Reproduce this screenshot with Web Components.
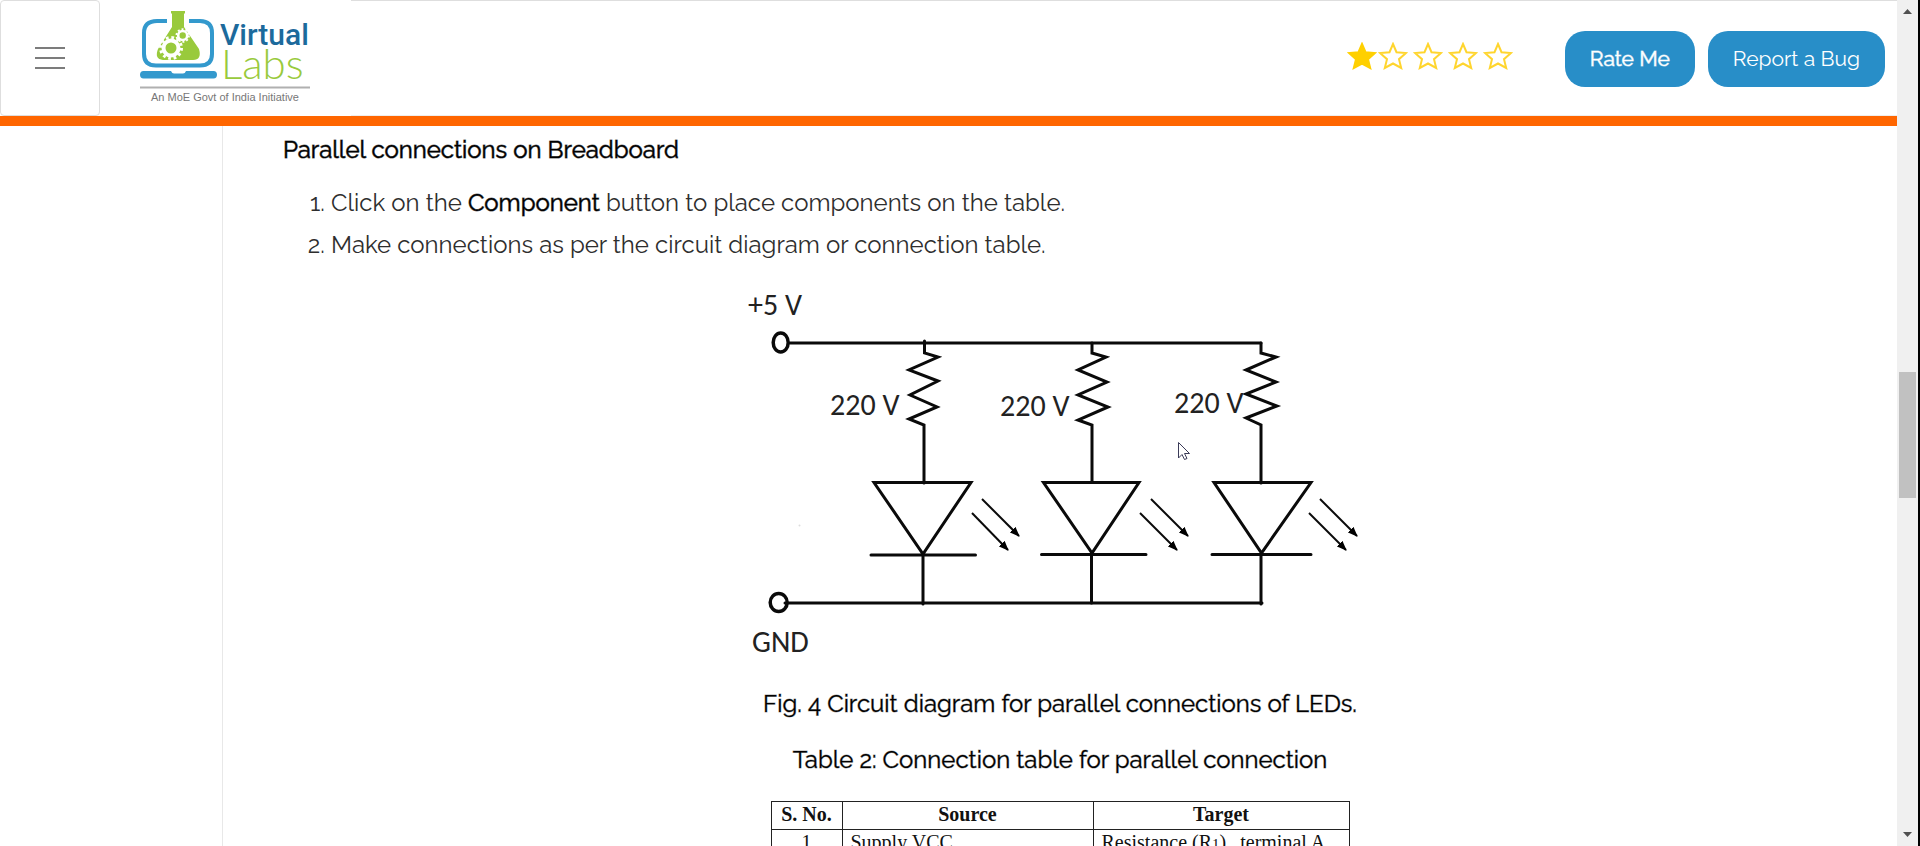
<!DOCTYPE html>
<html lang="en">
<head>
<meta charset="utf-8">
<title>Virtual Labs</title>
<style>
html, body { margin: 0; height: 100%; overflow: hidden; background: #fff; }
</style>
</head>
<body>
<lab-app></lab-app>

<script>
function define(name, markup, setup) {
  const template = document.createElement('template');
  template.innerHTML = markup;
  customElements.define(name, class extends HTMLElement {
    constructor() {
      super();
      this.attachShadow({ mode: 'open' }).appendChild(template.content.cloneNode(true));
    }
    connectedCallback() {
      if (setup) setup(this, this.shadowRoot);
    }
  });
}

define('menu-toggle', `
<style>
:host { display: flex; width: 100px; }
button { flex: 1; display: flex; align-items: center; justify-content: center; padding: 0; background: #fff; border: 1px solid #dedede; border-radius: 4px; }
</style>
<button type="button" aria-label="Toggle menu">
  <svg width="30" height="24" viewBox="0 0 30 24" stroke="#7c7c7c" stroke-width="2"><path d="M0 2H30M0 12H30M0 22H30"/></svg>
</button>`);

define('site-logo', `
<style>
:host { display: flex; }
a { display: block; }
svg { display: block; }
</style>
<a href="#" aria-label="Virtual Labs home">
<svg width="180" height="100" viewBox="136 6 180 100">
  <path d="M167 21H157Q144 21 144 33V54Q144 65.500 156 65.500H200Q212 65.500 212 54V33Q212 21 200 21H189" fill="none" stroke="#3399cd" stroke-width="4"/>
  <path d="M143.500 71H171Q172 73.500 174 73.500H183Q185 73.500 186 71H213.500Q217 71 217 74.800Q217 78.500 213.500 78.500H143.500Q140 78.500 140 74.800Q140 71 143.500 71Z" fill="#3399cd"/>
  <path d="M171 11H185V13.500H184V27L199 49Q202 60 193 60H163Q154 59 158 49L172 27V13.500H171Z" fill="#99ca3c"/>
  <g fill="none" stroke="#fff">
    <circle cx="171" cy="48" r="7.500" stroke-width="4"/>
    <circle cx="171" cy="48" r="10.500" stroke-width="3" stroke-dasharray="2.750 2.750"/>
    <circle cx="182.700" cy="35.500" r="4.500" stroke-width="2.600"/>
    <circle cx="182.700" cy="35.500" r="6.300" stroke-width="1.800" stroke-dasharray="2 1.960"/>
  </g>
  <text x="220" y="45" font-family="Roboto, sans-serif" font-weight="500" font-size="30" fill="#1c6a9c">Virtual</text>
  <text x="221" y="79" font-family="Lato, sans-serif" font-weight="300" font-size="42" fill="#99ca3c">Labs</text>
  <path d="M140 87.500H310" stroke="#b0b0b0" stroke-width="2"/>
  <text x="151" y="101" font-family="Liberation Sans, Arial, sans-serif" font-size="11" fill="#777">An MoE Govt of India Initiative</text>
</svg></a>`);

define('star-rating', `
<style>
:host { display: flex; gap: 5px; }
svg { display: block; fill: none; stroke: #ffd52e; stroke-width: 2; }
svg.on { fill: #ffd000; stroke: #ffd000; margin-right: -4px; }
</style>`, (host, root) => {
  const value = Number(host.getAttribute('value'));
  host.setAttribute('role', 'img');
  host.setAttribute('aria-label', value + ' of 5 stars');
  for (let i = 0; i < 5; i++) {
    root.innerHTML += `<svg class="${i < value ? 'on' : ''}" width="30" height="28" viewBox="0 0 30 28"><path d="M15 2L18.500 10.200L28 11L21 17.200L23.200 26L15 21.500L6.800 26L9 17.200L2 11L11.500 10.200Z"/></svg>`;
  }
});

define('pill-button', `
<style>
:host { display: block; }
button { display: block; height: 56px; padding: 0 25px; border: 0; border-radius: 20px; background: #288ec8; color: #fff; font: 400 21px/30px Raleway, Lato, sans-serif; white-space: nowrap; }
:host([strong]) button { -webkit-text-stroke: 1px rgba(255, 255, 255, .6); }
</style>
<button type="button"><slot></slot></button>`);

define('site-header', `
<style>
:host { display: flex; height: 116px; border-bottom: 10px solid #f60; background: #fff; }
site-logo { padding: 6px 0 0 36px; width: 215px; }
.bar { flex: 1; display: flex; align-items: center; justify-content: flex-end; box-sizing: border-box; padding: 2px 12px 0 0; border-top: 1px solid #dedede; border-bottom: 1px solid #eee; }
star-rating { margin: 0 52px 6px 0; }
.bar pill-button + pill-button { margin-left: 13px; }
</style>
<menu-toggle></menu-toggle>
<site-logo></site-logo>
<div class="bar">
  <star-rating value="1"></star-rating>
  <pill-button strong>Rate Me</pill-button>
  <pill-button>Report a Bug</pill-button>
</div>`);

define('circuit-diagram', `
<style>
:host { display: block; }
svg { display: block; margin: 0 auto; }
text { font: 30px Carlito, Lato, sans-serif; fill: #222; }
</style>
<svg width="640" height="390" viewBox="740 280 640 390" role="img" aria-label="Three LEDs in parallel, each with a series resistor">
  <defs>
    <marker id="tip" viewBox="0 0 10 8" markerWidth="10" markerHeight="8" refX="9" refY="4" orient="auto" markerUnits="userSpaceOnUse"><path d="M0 0L10 4L0 8Z"/></marker>
  </defs>
  <g fill="none" stroke="#0a0a0a" stroke-width="3" stroke-linecap="round">
    <ellipse cx="780.700" cy="342.500" rx="7.500" ry="9.500" stroke-width="3.500"/>
    <ellipse cx="778.700" cy="602.500" rx="8.500" ry="9" stroke-width="3.500"/>
    <path d="M790 343H1261"/>
    <path d="M785 603H1262"/>
    <path d="M924.500 341V353L938 357L909 370L938 381L910 395L937 407L909 419L924 425V483"/>
    <path d="M1092 343V353L1106 357L1078 370L1107 382L1078 395L1108 407L1078 420L1092 425V482"/>
    <path d="M1261 343V353L1276 357L1246 370L1276 382L1246 394L1277 406L1246 418L1261 425V483"/>
    <path d="M874 482.500H971L923 554ZM871 555H975.500M923 555V604"/>
    <path d="M1043.500 482.500H1139L1092 553ZM1041.500 554.500H1146M1091.500 554V603"/>
    <path d="M1214 482.500H1311L1261.500 553ZM1212 554.500H1311M1261 554V604"/>
    <g stroke-width="2" stroke-linecap="butt">
      <path d="M982 499L1019 536" marker-end="url(#tip)"/><path d="M972 513L1008 550" marker-end="url(#tip)"/>
      <path d="M1151 499L1188 536" marker-end="url(#tip)"/><path d="M1140 513L1177 550" marker-end="url(#tip)"/>
      <path d="M1320 499L1357 536" marker-end="url(#tip)"/><path d="M1309 513L1346 550" marker-end="url(#tip)"/>
    </g>
  </g>
  <circle cx="799.500" cy="525.500" r="1" fill="#ddd"/>
  <text x="748" y="315">+5 V</text>
  <text x="830" y="415">220 V</text>
  <text x="1000" y="416">220 V</text>
  <text x="1174" y="413">220 V</text>
  <text x="752" y="652">GND</text>
  <path d="M1178.500 442.500V458L1182 454.500L1184.500 459.500L1187 458.500L1184.500 453.500H1189.500Z" fill="#fff" stroke="#3b3b58" stroke-width="1"/>
</svg>`);

define('connection-table', `
<style>
:host { display: block; }
table { margin: 0 auto; width: 579px; border-collapse: collapse; table-layout: fixed; font: 20px/24px "Liberation Serif", "Times New Roman", serif; color: #111; }
th, td { border: 1px solid #222; padding: 0 8px 3px; text-align: left; white-space: nowrap; }
th, td:first-child { text-align: center; }
small { font-size: 15px; line-height: 1; }
.no { width: 54px; } .source { width: 234px; }
i { display: inline-block; width: 14px; }
</style>
<table>
  <thead><tr><th class="no" scope="col">S. No.</th><th class="source" scope="col">Source</th><th scope="col">Target</th></tr></thead>
  <tbody><tr><td>1</td><td>Supply VCC</td><td>Resistance (R<small>1</small>)<i></i>terminal A</td></tr></tbody>
</table>`);

define('lab-article', `
<style>
:host { display: block; padding: 9px 60px 0; font: 24px/30px Raleway, Lato, sans-serif; color: #2e2e2e; }
h2, .caption { margin: 0; font-size: 24px; font-weight: 400; color: #000; }
h2, strong { -webkit-text-stroke: 1px rgba(0, 0, 0, .6); }
.caption { -webkit-text-stroke: 1px rgba(0, 0, 0, .4); }
ol { margin: 17px 0 14px; padding-left: 48px; line-height: 42px; }
strong { color: #000; font-weight: 400; }
.caption { text-align: center; }
.figure { margin: 19px 0 26px; }
connection-table { margin-top: 26px; }
</style>
<h2>Parallel connections on Breadboard</h2>
<ol>
  <li>Click on the <strong>Component</strong> button to place components on the table.</li>
  <li>Make connections as per the circuit diagram or connection table.</li>
</ol>
<circuit-diagram></circuit-diagram>
<p class="caption figure">Fig. 4 Circuit diagram for parallel connections of LEDs.</p>
<p class="caption">Table 2: Connection table for parallel connection</p>
<connection-table></connection-table>`);

define('scroll-rail', `
<style>
:host { display: flex; flex-direction: column; align-items: center; box-sizing: border-box; width: 23px; padding: 9px 0; background: #f0f0f0; border-right: 2px solid #000; }
svg { display: block; fill: #505050; }
.track { flex: 1; display: grid; grid-template-rows: 358fr 126fr 334fr; }
.thumb { grid-row: 2; width: 17px; background: #c1c1c1; }
</style>
<svg width="9" height="5" viewBox="0 0 9 5"><path d="M0 5L4.500 0L9 5Z"/></svg>
<div class="track"><div class="thumb"></div></div>
<svg width="9" height="5" viewBox="0 0 9 5"><path d="M0 0L4.500 5L9 0Z"/></svg>`);

define('lab-app', `
<style>
:host { display: grid; grid-template-columns: minmax(0, 1fr) auto; height: 100vh; overflow: hidden; }
.page { display: flex; flex-direction: column; min-height: 0; overflow: hidden; }
site-header { flex: none; }
.body { flex: 1; display: grid; grid-template-columns: 222px minmax(0, 1fr); min-height: 0; overflow: hidden; }
main { border-left: 1px solid #e8e8e8; }
</style>
<div class="page">
  <site-header></site-header>
  <div class="body">
    <nav aria-label="Sections"></nav>
    <main><lab-article></lab-article></main>
  </div>
</div>
<scroll-rail></scroll-rail>`);
</script>
</body>
</html>
